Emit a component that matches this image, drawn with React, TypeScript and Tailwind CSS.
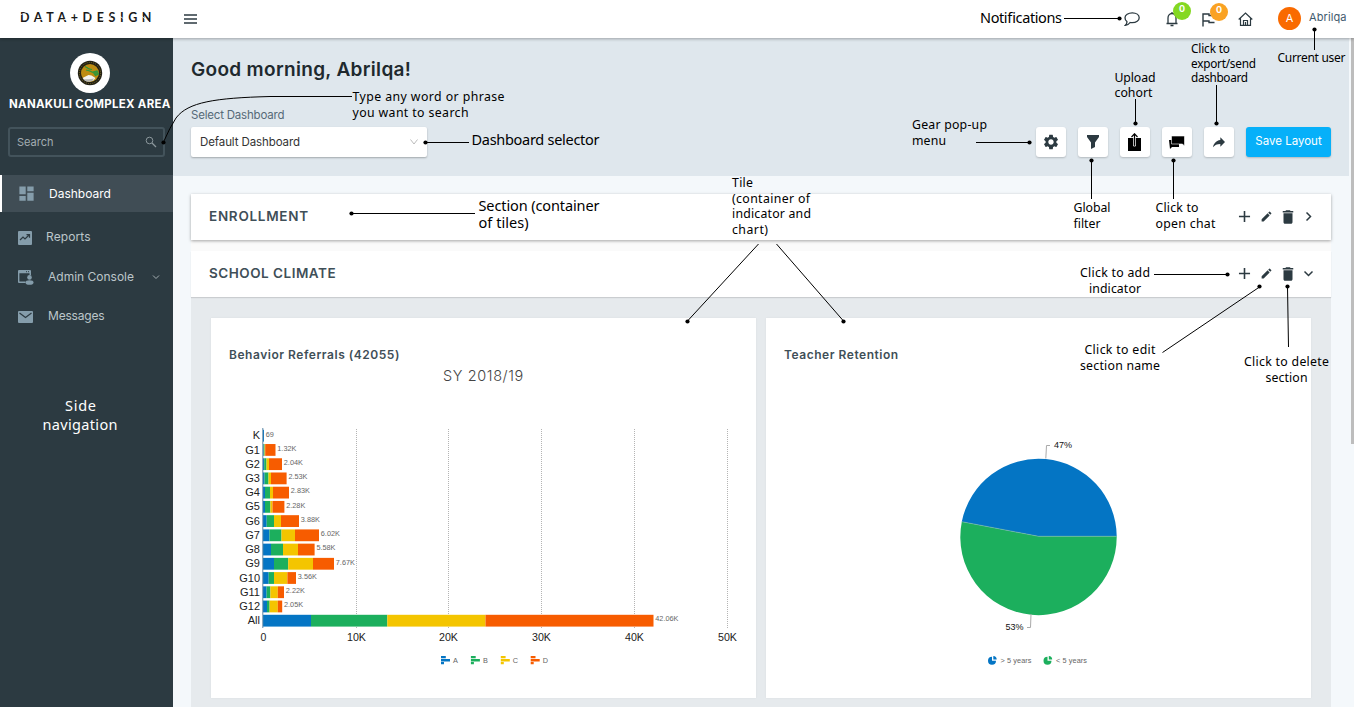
import type { ReactNode } from "react";
import { MdDashboard, MdSettings, MdEdit, MdDelete, MdAdd, MdSearch, MdReply } from "react-icons/md";

const COLORS = ["#0475c4", "#1caf5d", "#f4c500", "#f75c00"];

const BARS: { name: string; total: string; stops: number[] }[] = [
  { name: "K", total: "69", stops: [264, 264, 264, 264] },
  { name: "G1", total: "1.32K", stops: [263.6, 264.6, 265.2, 275.5] },
  { name: "G2", total: "2.04K", stops: [264.2, 266.5, 269, 282] },
  { name: "G3", total: "2.53K", stops: [264.6, 268.5, 271, 286.6] },
  { name: "G4", total: "2.83K", stops: [265, 270, 273, 289] },
  { name: "G5", total: "2.28K", stops: [265, 270.4, 272.5, 284.4] },
  { name: "G6", total: "3.88K", stops: [266.7, 274, 281, 299] },
  { name: "G7", total: "6.02K", stops: [269.5, 281.5, 295, 319] },
  { name: "G8", total: "5.58K", stops: [271, 283, 298, 314.6] },
  { name: "G9", total: "7.67K", stops: [274, 288.2, 313, 334] },
  { name: "G10", total: "3.56K", stops: [268.7, 274, 287.4, 296] },
  { name: "G11", total: "2.22K", stops: [266.6, 270.4, 277.8, 284] },
  { name: "G12", total: "2.05K", stops: [267, 269.6, 277.8, 282.2] },
  { name: "All", total: "42.06K", stops: [311, 387.3, 485.5, 653.5] },
];

function BarChart() {
  return (
    <svg className="block h-[308px] w-[545px]" viewBox="211 390 545 308" fontFamily="Liberation Sans, Arial, sans-serif">
      {[356.5, 448.5, 541.5, 634.5, 727.5].map((x, i) => (
        <g key={x}>
          <line x1={x} x2={x} y1={429} y2={629} stroke="#b4b4b4" strokeDasharray="1 1" />
          <text x={x} y={641} fontSize="10.5" textAnchor="middle" fill="#222" textLength="19" lengthAdjust="spacingAndGlyphs">{`${i + 1}0K`}</text>
        </g>
      ))}
      <text x={263.5} y={641} fontSize="10.5" textAnchor="middle" fill="#222">0</text>
      {BARS.map((b, r) => {
        const mid = 435.7 + r * 14.23;
        let x = 263;
        return (
          <g key={b.name}>
            <text x={260} y={mid + 3.6} fontSize="11" textAnchor="end" fill="#222">{b.name}</text>
            {b.stops.map((s, i) => {
              const from = x;
              x = s;
              return <rect key={i} x={from} y={mid - 5.9} width={s - from} height={11.8} fill={COLORS[i]} />;
            })}
            <text x={x + 1.8} y={mid + 0.8} fontSize="7.3" fill="#666">{b.total}</text>
          </g>
        );
      })}
      <line x1={262.8} x2={262.8} y1={428} y2={628} stroke="#5c86a5" />
      {["A", "B", "C", "D"].map((l, i) => (
        <g key={l} transform={`translate(${441 + i * 29.9} 656)`}>
          <path d="M0 0h4.8v2.300H0zM0 2.900h9v2.500H0zM0 6h3v2.300H0z" fill={COLORS[i]} />
          <text x={12} y={7} fontSize="7.3" fill="#666">{l}</text>
        </g>
      ))}
    </svg>
  );
}

function PieChart() {
  return (
    <svg className="block h-[308px] w-[545px]" viewBox="766 390 545 308" fontFamily="Liberation Sans, Arial, sans-serif">
      <path d="M1038.5 536.3L961.8 521.7A78.2 78.2 0 0 1 1116.7 536.3Z" fill={COLORS[0]} />
      <path d="M1038.5 536.3L961.8 521.7A78.2 78.2 0 1 0 1116.7 536.3Z" fill={COLORS[1]} />
      <path d="M961.8 521.7L1038.5 536.3H1116.7" fill="none" stroke="#7fb7b4" strokeWidth="0.6" />
      <path d="M1045.8 458.5L1046.5 445.5H1050M1031 614L1030.5 627.5H1027" fill="none" stroke="#aaa" />
      <text x={1054} y={448} fontSize="9" fill="#111" textLength="18">47%</text>
      <text x={1005.5} y={630} fontSize="9" fill="#111" textLength="18">53%</text>
      {[
        { x: 988, t: "> 5 years", c: COLORS[0] },
        { x: 1043.5, t: "< 5 years", c: COLORS[1] },
      ].map((l) => (
        <g key={l.x} transform={`translate(${l.x} 656)`}>
          <path d="M4 .8V4.8H8A4 4 0 1 1 4 .8Z" fill={l.c} />
          <path d="M5.3 0A3.6 3.6 0 0 1 8.7 3.4H5.3Z" fill={l.c} />
          <text x={12.5} y={7} fontSize="7.3" fill="#666" textLength="31">{l.t}</text>
        </g>
      ))}
    </svg>
  );
}

function Header() {
  return (
    <header className="relative z-10 flex h-[38px] shrink-0 items-center bg-white shadow-[0_1px_3px_rgba(0,0,0,0.3)]">
      <div className="w-[173px] pb-1 pl-5">
        <svg className="block h-[14px] w-[140px]" viewBox="0 0 140 14">
          <text x="0" y="11.500" fontSize="12.500" fontWeight="700" fontFamily="Lato, sans-serif" fill="#1a1a1a" textLength="131.500">DATA+DESIGN</text>
          <path d="M0 5L10 1M67 5L77 1M16 9.500h10M44 9.500h10M83 12L92 5M98 5L107 11M119 4l10 8" stroke="#fff" strokeWidth=".8" />
        </svg>
      </div>
      <svg className="ml-[11px] h-[10px] w-[13px]" viewBox="0 0 13 10">
        <path d="M0 1h13M0 5h13M0 9h13" stroke="#2c3a41" strokeWidth="1.5" />
      </svg>
      <div className="ml-auto flex items-center pr-[6px] pb-[1px]">
        <svg className="mr-[26px] h-4 w-4" viewBox="0 0 16 16" fill="none" stroke="#2c3a41" strokeWidth="1.3">
          <path d="M8.300 1.800c4 0 6.900 2.100 6.900 4.900s-3 5-7 5c-.8 0-1.400-.1-2.100-.2-1 1.500-2.500 2.600-4.700 2.800 1-1 1.700-2.200 1.500-3.700C1.700 9.700 1 8.300 1 6.700c0-2.800 3.300-4.900 7.300-4.900Z" />
        </svg>
        <div className="relative mr-6 h-4 w-3">
          <svg className="h-4 w-3" viewBox="0 0 12 16" fill="none" stroke="#2c3a41" strokeWidth="1.3">
            <path d="M.5 12.500h11M2 12V7c0-2.500 1.500-4.500 4-4.500s4 2 4 4.500v5M6 1v1.500M4.500 14.500h3" />
          </svg>
          <span className="absolute -top-[9px] left-[7px] flex h-[18px] w-[18px] items-center justify-center rounded-full bg-[#84d822] pb-[3px] text-[9px] font-bold text-white">0</span>
        </div>
        <div className="relative mr-6 h-4 w-3">
          <svg className="h-4 w-[13px]" viewBox="0 0 13 16" fill="none" stroke="#2c3a41" strokeWidth="1.4">
            <path d="M1 15.500V3h6v1.500h5.500M1 10h6v1.500h5.500" />
          </svg>
          <span className="absolute -top-[8px] left-[8px] flex h-[18px] w-[18px] items-center justify-center rounded-full bg-[#faa223] pb-[3px] text-[9px] font-bold text-white">0</span>
        </div>
        <svg className="mr-[25px] h-[14px] w-[15px]" viewBox="0 0 15 14" fill="none" stroke="#2c3a41" strokeWidth="1.2">
          <path d="M.7 7.500L7.500 1l6.800 6.500M2.500 6.500v6.800h10V6.500M5.500 13V8.500h4V13M7.500 10v3" />
        </svg>
        <div className="mr-[8px] flex h-[23px] w-[23px] items-center justify-center rounded-full bg-[#f96a00] text-[11px] text-white">A</div>
        <span className="w-[39px] pb-[2px] text-[11px] tracking-[0.1px] text-[#3f5a6e]">Abrilqa</span>
      </div>
    </header>
  );
}

function Seal() {
  return (
    <div className="mx-auto flex h-10 w-10 items-center justify-center rounded-full bg-white">
      <svg className="h-[26px] w-[26px]" viewBox="0 0 26 26">
        <circle cx="13" cy="13" r="12.2" fill="#211f14" />
        <circle cx="13" cy="13" r="10.600" fill="none" stroke="#7d6c22" strokeWidth="1" strokeDasharray="1 1.200" />
        <circle cx="13" cy="13" r="9" fill="#bd8c12" />
        <path d="M8 6.500l4 2.500 3 .5M9 10l4 1 4 2M16 12l4-1 1.500 3-3 1.500z" stroke="#2f9a3c" strokeWidth="1.100" fill="#27923f" fillOpacity=".8" />
        <path d="M5.500 18l3-1.500 3-1.500 3 .5 4 2.500-2 2.500-4 1-4-.5z" fill="#f3f3f0" />
        <path d="M6 19.500c4-.5 7 0 11-1l-2 2.800-5 .5z" fill="#b5b6b2" />
      </svg>
    </div>
  );
}

function NavItem({ icon, label, className }: { icon: ReactNode; label: string; className: string }) {
  return (
    <div className={`flex items-center text-[12px] text-[#bcc6ca] ${className}`}>
      {icon}
      <span>{label}</span>
    </div>
  );
}

function Sidebar() {
  return (
    <aside className="flex w-[173px] shrink-0 flex-col bg-[#2c3a41] pt-[15px]">
      <div className="w-[180px]"><Seal /></div>
      <div className="mt-[3px] h-4 pl-[9px] text-[11.500px] leading-[17px] font-bold tracking-[0.28px] whitespace-nowrap text-white">NANAKULI COMPLEX AREA</div>
      <div className="mt-[15px] ml-2 flex h-[30px] w-[157px] items-center justify-between rounded-[3px] border-2 border-[#43535b] pr-[5px] pl-[7px] text-[11px] text-[#a3adb1]">
        <span>Search</span>
        <svg className="mr-[1px] h-[12px] w-[12px]" viewBox="0 0 12 12" fill="none" stroke="#8b979c"><circle cx="4.500" cy="4.500" r="3.300" /><path d="M7 7l4 4" strokeWidth="1.300" /></svg>
      </div>
      <nav className="mt-[18px]">
        <NavItem className="h-[37px] border-l-2 border-white bg-[#404d55] pl-[15px] !text-white" label="Dashboard" icon={<MdDashboard className="mr-[13px] h-[19px] w-[19px] text-[#859dab]" />} />
        <NavItem
          className="h-[49px] pl-[18px] tracking-[0.1px]"
          label="Reports"
          icon={
            <svg className="mt-[2px] mr-[14px] h-[14px] w-[14px]" viewBox="0 0 14 14">
              <rect width="14" height="14" rx="1" fill="#859dab" />
              <path d="M2 9l3-3 2 2 4-4M8.500 3.700h3v3" stroke="#2c3a41" fill="none" strokeWidth="1.200" />
            </svg>
          }
        />
        <div className="flex h-[32px] items-center pl-[18px] text-[12px] text-[#bcc6ca]">
          <svg className="mt-[1px] mr-[14px] h-[15px] w-[16px]" viewBox="0 0 16 15">
            <path d="M1 0h11a1 1 0 0 1 1 1v4h-1.500V3.200H1.400v8.400H7.500V13H1a1 1 0 0 1-1-1V1a1 1 0 0 1 1-1z" fill="#859dab" />
            <path d="M8 1.700h1M10 1.700h1" stroke="#2c3a41" />
            <circle cx="11.500" cy="7.400" r="2.300" fill="#859dab" />
            <ellipse cx="11.500" cy="12.500" rx="4" ry="2.300" fill="#859dab" />
          </svg>
          <span>Admin Console</span>
          <svg className="ml-auto mr-[13px] h-[5px] w-[8px]" viewBox="0 0 8 5"><path d="M1 .5l3 3 3-3" stroke="#a3adb1" fill="none" /></svg>
        </div>
        <NavItem
          className="h-[46px] pl-[18px] tracking-[-0.2px]"
          label="Messages"
          icon={
            <svg className="mt-[2px] mr-[15px] h-[12px] w-[15px]" viewBox="0 0 15 12">
              <rect width="15" height="12" rx="1" fill="#859dab" />
              <path d="M1.500 2l6 4.500 6-4.500" stroke="#2c3a41" fill="none" strokeWidth="1.200" />
            </svg>
          }
        />
      </nav>
    </aside>
  );
}

function ToolButton({ children }: { children: ReactNode }) {
  return <button className="flex h-[30px] w-[30px] items-center justify-center rounded-[3px] bg-white text-[#2c3a41] shadow-[0_1px_2px_rgba(0,0,0,0.2)]">{children}</button>;
}

function Toolbar() {
  return (
    <div className="flex gap-3">
      <ToolButton><MdSettings className="mr-[1px] h-[18px] w-[18px]" /></ToolButton>
      <ToolButton>
        <svg className="h-[14px] w-[12px]" viewBox="0 0 12 14"><path d="M0 0h12v2L8 7.500V12l-4 2V7.500L0 2z" fill="currentColor" /></svg>
      </ToolButton>
      <ToolButton>
        <svg className="mr-[1px] h-[18px] w-[13px]" viewBox="0 0 13 18">
          <path d="M0 5h13v13H0z" fill="#000" />
          <path d="M5.500 3.500v9.500h2V3.500" fill="none" stroke="#fff" strokeWidth=".8" />
          <path d="M3.500 4L6.500 .8l3 3.200M6.500 1v11.500" fill="none" stroke="#000" strokeWidth="1.200" />
        </svg>
      </ToolButton>
      <ToolButton>
        <svg className="h-[13px] w-[16px]" viewBox="0 0 16 13">
          <path d="M0 4h10v7H3l-2 2z" fill="#000" />
          <path d="M2.500 0h13v10l-2-2h-11z" fill="#000" stroke="#fff" strokeWidth=".6" />
        </svg>
      </ToolButton>
      <ToolButton><MdReply className="h-4 w-4 -scale-x-100" /></ToolButton>
      <button className="h-[30px] w-[85px] rounded-[3px] bg-[#06b0f9] pb-[1px] text-[11.500px] text-white shadow-[0_1px_2px_rgba(0,0,0,0.2)]">Save Layout</button>
    </div>
  );
}

function SectionBar({ title, open }: { title: string; open?: boolean }) {
  return (
    <div className={`relative flex h-[46px] items-center bg-white pr-[17px] pb-[1px] pl-[18px] ${open ? "shadow-[0_1px_1px_rgba(0,0,0,0.12)]" : "shadow-[0_1px_3px_rgba(0,0,0,0.35)]"}`}>
      <h2 className={`text-[13.500px] font-semibold text-[#3f4f58] ${open ? "tracking-[0.5px]" : "tracking-[0.72px]"}`}>{title}</h2>
      <div className="ml-auto flex items-center text-[#2c3a41]">
        <MdAdd className="mr-[6px] h-[19px] w-[19px]" />
        <MdEdit className="mr-[6px] h-[13px] w-[13px]" />
        <MdDelete className="mr-[6px] h-[18px] w-[18px]" />
        <svg className="h-[11px] w-[11px]" viewBox="0 0 11 11" fill="none" stroke="currentColor" strokeWidth="1.500">
          <path d={open ? "M1.500 3.500l4 4 4-4" : "M3.500 1.500l4 4-4 4"} />
        </svg>
      </div>
    </div>
  );
}

function Tile({ title, subtitle, children }: { title: string; subtitle?: string; children: ReactNode }) {
  return (
    <article className="h-[380px] w-[545px] bg-white shadow-[0_0_2px_rgba(0,0,0,0.06)]">
      <div className="h-[72px] pt-[28px]">
        <h3 className="h-[18px] pl-[18px] text-[12px] leading-[18px] font-semibold tracking-[0.53px] text-[#3f4f58]">{title}</h3>
        {subtitle && <p className="h-6 text-center text-[14.500px] leading-6 font-light tracking-[0.600px] text-[#444]">{subtitle}</p>}
      </div>
      {children}
    </article>
  );
}

type Note = { x: number; size: number; center?: boolean; lines: { y: number; w: number; t: string }[] };

const NOTES: Note[] = [
  { x: 980, size: 14.5, lines: [{ y: 23, w: 82, t: "Notifications" }] },
  { x: 352.5, size: 12.3, lines: [{ y: 100.5, w: 152, t: "Type any word or phrase" }, { y: 116.5, w: 116, t: "you want to search" }] },
  { x: 471.5, size: 14.5, lines: [{ y: 145, w: 128, t: "Dashboard selector" }] },
  { x: 478.5, size: 14.5, lines: [{ y: 210.5, w: 121, t: "Section (container" }, { y: 228, w: 50, t: "of tiles)" }] },
  { x: 732, size: 12.3, lines: [{ y: 186.5, w: 21, t: "Tile" }, { y: 202.5, w: 78, t: "(container of" }, { y: 218, w: 79, t: "indicator and" }, { y: 234, w: 36, t: "chart)" }] },
  { x: 912, size: 12.3, lines: [{ y: 128.5, w: 75, t: "Gear pop-up" }, { y: 144.5, w: 34, t: "menu" }] },
  { x: 1114.5, size: 12.3, lines: [{ y: 81.5, w: 41, t: "Upload" }, { y: 97, w: 38, t: "cohort" }] },
  { x: 1191, size: 11.8, lines: [{ y: 53, w: 39, t: "Click to" }, { y: 67.5, w: 65, t: "export/send" }, { y: 82, w: 57, t: "dashboard" }] },
  { x: 1277.5, size: 12, lines: [{ y: 62, w: 68, t: "Current user" }] },
  { x: 1073.5, size: 12.3, lines: [{ y: 211.5, w: 37, t: "Global" }, { y: 227.5, w: 27, t: "filter" }] },
  { x: 1155.5, size: 12.3, lines: [{ y: 211.5, w: 43, t: "Click to" }, { y: 227.5, w: 60, t: "open chat" }] },
  { x: 1115, size: 12.3, center: true, lines: [{ y: 276.5, w: 70, t: "Click to add" }, { y: 292.5, w: 52, t: "indicator" }] },
  { x: 1120, size: 12.3, center: true, lines: [{ y: 353.5, w: 71, t: "Click to edit" }, { y: 369.5, w: 80, t: "section name" }] },
  { x: 1286.5, size: 12.3, center: true, lines: [{ y: 365.5, w: 85, t: "Click to delete" }, { y: 381.5, w: 42, t: "section" }] },
];

const LEADERS: { d: string; x: number; y: number }[] = [
  { d: "M1064 18.500H1119", x: 1119.500, y: 18.500 },
  { d: "M1314.500 30V50", x: 1314.500, y: 29.500 },
  { d: "M1135.500 99V124", x: 1135.500, y: 123.500 },
  { d: "M1216.500 85V124", x: 1216.500, y: 123.500 },
  { d: "M976 142.500H1030", x: 1029.500, y: 142.500 },
  { d: "M1091.500 160V199", x: 1091.500, y: 160.500 },
  { d: "M1173.500 160V199", x: 1173.500, y: 160.500 },
  { d: "M425 142.500H469", x: 425.500, y: 142.500 },
  { d: "M351 213.500H475", x: 351.500, y: 213.500 },
  { d: "M352 96.500H270C215 98 188 102 176 118Q170 127 163.500 142", x: 163.500, y: 142.500 },
  { d: "M758.500 244L687.500 321", x: 687.500, y: 321.500 },
  { d: "M776.500 244L843.500 321", x: 843.500, y: 321.500 },
  { d: "M1154 274.500H1228", x: 1227.500, y: 274.500 },
  { d: "M1162.500 352.500L1259.500 287", x: 1259.500, y: 286.500 },
  { d: "M1288.500 347L1287.500 287", x: 1287.500, y: 286.500 },
];

function Annotations() {
  return (
    <svg className="pointer-events-none absolute inset-0 z-20 h-[707px] w-[1354px]" viewBox="0 0 1354 707" fontFamily="Noto Sans, sans-serif">
      {LEADERS.map((l) => (
        <g key={l.d}>
          <path d={l.d} fill="none" stroke="#000" />
          <circle cx={l.x} cy={l.y} r="2.100" />
        </g>
      ))}
      {NOTES.flatMap((n) =>
        n.lines.map((l) => (
          <text key={`${n.x}-${l.y}`} x={n.x} y={l.y} fontSize={n.size} textLength={l.w} textAnchor={n.center ? "middle" : "start"}>{l.t}</text>
        ))
      )}
      <g fill="#fff" fontSize="14.500" textAnchor="middle">
        <text x="80.500" y="410.500" textLength="31">Side</text>
        <text x="80" y="430" textLength="75">navigation</text>
      </g>
    </svg>
  );
}

export default function App() {
  return (
    <div className="relative flex h-[707px] w-[1354px] flex-col overflow-hidden bg-[#f4f8fb] font-[Inter,sans-serif]">
      <Header />
      <div className="flex min-h-0 flex-1">
        <Sidebar />
        <main className="w-[1176px] overflow-hidden">
          <div className="flex h-[138px] flex-col bg-[#dfe7ed] pt-[18px] pr-[18px] pl-[18px]">
            <h1 className="h-[26px] text-[19px] leading-[27px] font-semibold tracking-[0.32px] text-[#20292e]">Good morning, Abrilqa!</h1>
            <div className="mt-[25px] flex items-end justify-between">
              <div>
                <label className="block h-4 text-[11.500px] leading-4 tracking-[-0.2px] text-[#566a78]">Select Dashboard</label>
                <div className="mt-[4px] flex h-[30px] w-[236px] items-center justify-between rounded-[2px] bg-white pr-[9px] pl-[9px] text-[11.500px] tracking-[-0.1px] text-[#333] shadow-[0_1px_2px_rgba(0,0,0,0.28)]">
                  <span className="pt-[1px]">Default Dashboard</span>
                  <svg className="h-[6px] w-[8px]" viewBox="0 0 8 6"><path d="M.5 .5l3.500 4.500L7.500 .5" stroke="#aaa" strokeWidth=".8" fill="none" /></svg>
                </div>
              </div>
              <Toolbar />
            </div>
          </div>
          <div className="px-[18px] pt-[18px]">
            <SectionBar title="ENROLLMENT" />
            <div className="h-[11px] bg-[#fafafa]" />
            <SectionBar title="SCHOOL CLIMATE" open />
            <div className="flex h-[420px] gap-[10px] bg-[#e6eaed] px-5 pt-[21px]">
              <Tile title="Behavior Referrals (42055)" subtitle="SY 2018/19"><BarChart /></Tile>
              <Tile title="Teacher Retention"><PieChart /></Tile>
            </div>
          </div>
        </main>
        <div className="flex flex-1 justify-end bg-[#f4f8fb]">
          <div className="h-[406px] w-[3px] bg-[#bdbdbd]" />
        </div>
      </div>
      <Annotations />
    </div>
  );
}
